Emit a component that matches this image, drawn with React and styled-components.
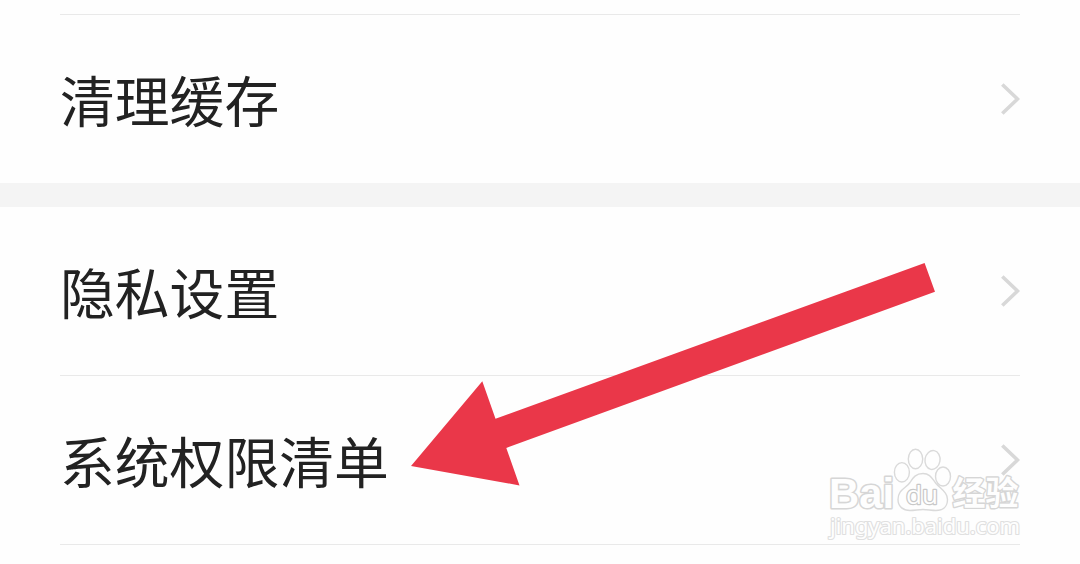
import React from "react";
import styled, { createGlobalStyle } from "styled-components";

function App() {
  return (
    <>
      <GlobalStyle />
      <Page>
        <Section>
          <Spacer />
          <Divider />
          <SettingRow label="清理缓存" />
        </Section>
        <Gap />
        <Section>
          <SettingRow label="隐私设置" />
          <Divider />
          <SettingRow label="系统权限清单" />
          <Divider />
        </Section>
        <Arrow viewBox="0 0 526 224" aria-hidden="true">
          <path d="M0 203 71.300 118.300 84.500 155.800 513.600 0 524 28.700 95.300 184.900 108.500 222.400Z" fill="#ea3749" />
        </Arrow>
        <Watermark />
      </Page>
    </>
  );
}

function SettingRow({ label }) {
  return (
    <Row>
      <Label>{label}</Label>
      <Chevron viewBox="0 0 20 32" aria-hidden="true">
        <path d="M2.300 1.500 17.500 16 2.300 30.500" />
      </Chevron>
    </Row>
  );
}

function Watermark() {
  return (
    <WatermarkSvg viewBox="0 0 204 100">
      <Paw>
        <ellipse cx="76.900" cy="27.300" rx="7.500" ry="9.700" />
        <ellipse cx="90.500" cy="14" rx="7.200" ry="9.800" />
        <ellipse cx="107.500" cy="15" rx="7.500" ry="9.500" transform="rotate(10 107.500 15)" />
        <ellipse cx="118" cy="31.500" rx="7.500" ry="9.500" />
        <path d="M98 28.500c-7 0-10 4-13 9-4 6-12 7-12 17 0 7 5 11 12 11 5 0 8-1 13-1s8 1 13 1c7 0 11.500-4 11.500-11 0-7-6-10-11.500-16-4-5-6-10-13-10Z" />
      </Paw>
      <Brand x="4" y="63" textLength="65" lengthAdjust="spacingAndGlyphs">
        Bai
      </Brand>
      <BrandInner x="81" y="59" textLength="32" lengthAdjust="spacingAndGlyphs">
        du
      </BrandInner>
      <BrandCn x="127.500" y="60" textLength="66">
        经验
      </BrandCn>
      <Url x="5" y="89" textLength="190" lengthAdjust="spacingAndGlyphs">
        jingyan.baidu.com
      </Url>
    </WatermarkSvg>
  );
}

export default App;

const GlobalStyle = createGlobalStyle`
  body {
    margin: 0;
    background: #fefefe;
    overflow: hidden;
  }
`;

const Page = styled.main`
  position: relative;
  height: 564px;
  overflow: hidden;
  background: #fefefe;
  font-family: "Noto Sans CJK SC", sans-serif;
`;

const Section = styled.section`
  padding: 0 60px;
`;

const Spacer = styled.div`
  height: 14px;
`;

const Divider = styled.div`
  height: 1px;
  background: #e9e9e9;
`;

const Gap = styled.div`
  height: 24px;
  background: #f4f4f4;
`;

const Row = styled.div`
  height: 168px;
  display: flex;
  align-items: center;
  justify-content: space-between;
`;

const Label = styled.span`
  margin-bottom: 2px;
  font-size: 54.8px;
  line-height: 80px;
  color: #222;
`;

const Chevron = styled.svg`
  width: 20px;
  height: 32px;
  fill: none;
  stroke: #d8d8d8;
  stroke-width: 3.6;
`;

const Arrow = styled.svg`
  position: absolute;
  left: 411px;
  top: 263px;
  width: 526px;
  height: 224px;
`;

const WatermarkSvg = styled.svg`
  position: absolute;
  left: 825px;
  top: 445px;
  width: 204px;
  height: 100px;
  overflow: visible;
`;

const Brand = styled.text`
  font-family: "Liberation Sans", sans-serif;
  font-size: 43px;
  font-weight: 700;
  fill: #fefefe;
  stroke: #d6d6d6;
  stroke-width: 3.2px;
  stroke-linejoin: round;
  paint-order: stroke;
`;

const BrandInner = styled(Brand)`
  font-family: "Open Sans", sans-serif;
  font-size: 25px;
  font-weight: 400;
  stroke: #c8c8c8;
  stroke-width: 2.4px;
`;

const BrandCn = styled(Brand)`
  font-family: "Noto Sans CJK SC", sans-serif;
  font-size: 33px;
  stroke-width: 2.8px;
`;

const Url = styled(Brand)`
  font-family: "Noto Sans", sans-serif;
  font-size: 21px;
  font-weight: 400;
  stroke: #e0e0e0;
  stroke-width: 2.2px;
`;

const Paw = styled.g`
  fill: #fefefe;
  stroke: #dadada;
  stroke-width: 1.4px;
`;
